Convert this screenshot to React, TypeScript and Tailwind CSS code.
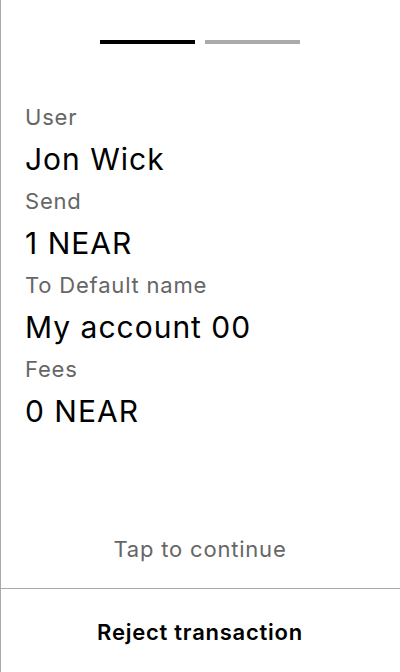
import { FC } from 'react';

const rows = [
  { label: 'User', value: 'Jon Wick' },
  { label: 'Send', value: '1 NEAR' },
  { label: 'To Default name', value: 'My account 00' },
  { label: 'Fees', value: '0 NEAR' },
];

const App: FC = () => {
  return (
    <div
      className="flex flex-col h-[672px] w-[400px] bg-white shadow-[inset_1px_0_0_#aaaaaa]"
      style={{ fontFamily: 'Inter, "Noto Sans", sans-serif' }}
    >
      <div className="flex justify-center gap-[10px] pt-10">
        <span className="w-[95px] h-1 bg-black" />
        <span className="w-[95px] h-1 bg-[#aaaaaa]" />
      </div>
      <div className="flex flex-col pl-[25px] pr-6 mt-[55px]">
        {rows.map((row) => (
          <div key={row.label} className="flex flex-col">
            <span className="text-[22px] leading-[36px] tracking-[0.8px] text-[#666666]">
              {row.label}
            </span>
            <span className="text-[30px] leading-[48px] tracking-[1px] text-black">
              {row.value}
            </span>
          </div>
        ))}
      </div>
      <div className="flex-1" />
      <span className="text-center text-[22px] leading-[28px] tracking-[0.8px] text-[#666666] mb-[25px]">
        Tap to continue
      </span>
      <button className="h-[84px] pt-[3px] border-t border-[#aaaaaa] text-[22px] leading-[28px] tracking-[0.75px] font-semibold text-black">
        Reject transaction
      </button>
    </div>
  );
};

export default App;
